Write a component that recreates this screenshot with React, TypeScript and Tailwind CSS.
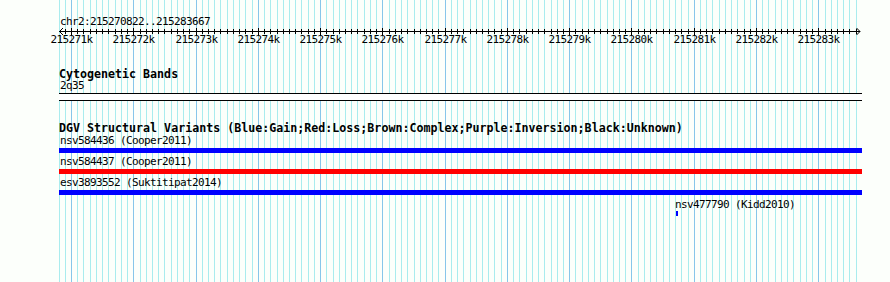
import React from "react";

const PX_PER_BP = 0.062275;
const xOf = (p: number) => Math.round(71 + (p - 215271000) * PX_PER_BP);

// grid lines every 100bp
const GRID = Array.from({ length: 129 }, (_, k) => 215270800 + k * 100);
const MAJORS = GRID.filter((p) => p % 1000 === 0);

const VARIANTS = [
  { label: "nsv584436 (Cooper2011)", color: "bg-[#0000ff]" },
  { label: "nsv584437 (Cooper2011)", color: "bg-[#ff0000]" },
  { label: "esv3893552 (Suktitipat2014)", color: "bg-[#0000ff]" },
];

const mono = "font-['DejaVu_Sans_Mono',monospace]";
const small = "h-[12px] text-[11px] leading-[12px] tracking-[-0.62px] whitespace-nowrap";
const bold = "h-[12px] pl-[59px] text-[11.65px] font-bold leading-[12px] whitespace-nowrap";

function Grid() {
  return (
    <svg className="absolute inset-0" width={890} height={282}>
      {GRID.map((p) => (
        <line
          key={p}
          x1={xOf(p) + 0.5}
          x2={xOf(p) + 0.5}
          y1={0}
          y2={282}
          stroke={p % 1000 === 0 ? "#87c6ea" : "#a9ecee"}
          strokeWidth={1}
        />
      ))}
    </svg>
  );
}

function Ruler() {
  return (
    <svg width={890} height={18} className="block">
      <line x1={59} x2={860} y1={3.5} y2={3.5} stroke="black" />
      <polyline points="63,0 59.5,3.5 63,7" fill="none" stroke="black" />
      <polyline points="856.5,0 860,3.5 856.5,7" fill="none" stroke="black" />
      {GRID.filter((p) => p >= 215270900).map((p) => (
        <line
          key={p}
          x1={xOf(p) + 0.5}
          x2={xOf(p) + 0.5}
          y1={p % 1000 === 0 ? 0 : 1}
          y2={p % 1000 === 0 ? 7 : 6}
          stroke="black"
        />
      ))}
      {MAJORS.map((p) => (
        <text
          key={p}
          x={xOf(p) + 0.5}
          y={15.3}
          textAnchor="middle"
          fontFamily="DejaVu Sans Mono, monospace"
          fontSize={11}
          letterSpacing={-0.62}
          fill="black"
        >
          {p / 1000}k
        </text>
      ))}
    </svg>
  );
}

export default function App() {
  return (
    <div className={`relative w-[890px] h-[282px] overflow-hidden bg-[#fcfffb] text-black ${mono}`}>
      <Grid />
      <div className="relative flex flex-col">
        <div className={`mt-[16px] pl-[60px] ${small}`}>chr2:215270822..215283667</div>
        <Ruler />

        {/* Cytogenetic Bands */}
        <div className={`mt-[22px] ${bold}`}>Cytogenetic Bands</div>
        <div className={`pl-[60px] ${small}`}>2q35</div>
        <div className="mt-[1px] ml-[59px] w-[803px] h-[8px] border-y border-black bg-white" />

        {/* DGV */}
        <div className={`mt-[21px] ${bold}`}>
          DGV Structural Variants (Blue:Gain;Red:Loss;Brown:Complex;Purple:Inversion;Black:Unknown)
        </div>
        {VARIANTS.map((v, i) => (
          <div key={v.label} className={i === 0 ? "mt-[1px]" : "mt-[3px]"}>
            <div className={`pl-[60px] ${small}`}>{v.label}</div>
            <div className={`mt-[1px] ml-[59px] w-[803px] h-[5px] ${v.color}`} />
          </div>
        ))}
        <div className={`mt-[4px] pl-[675px] ${small}`}>nsv477790 (Kidd2010)</div>
        <div className="ml-[676px] w-[2px] h-[5px] bg-[#0000ff]" />
      </div>
    </div>
  );
}
